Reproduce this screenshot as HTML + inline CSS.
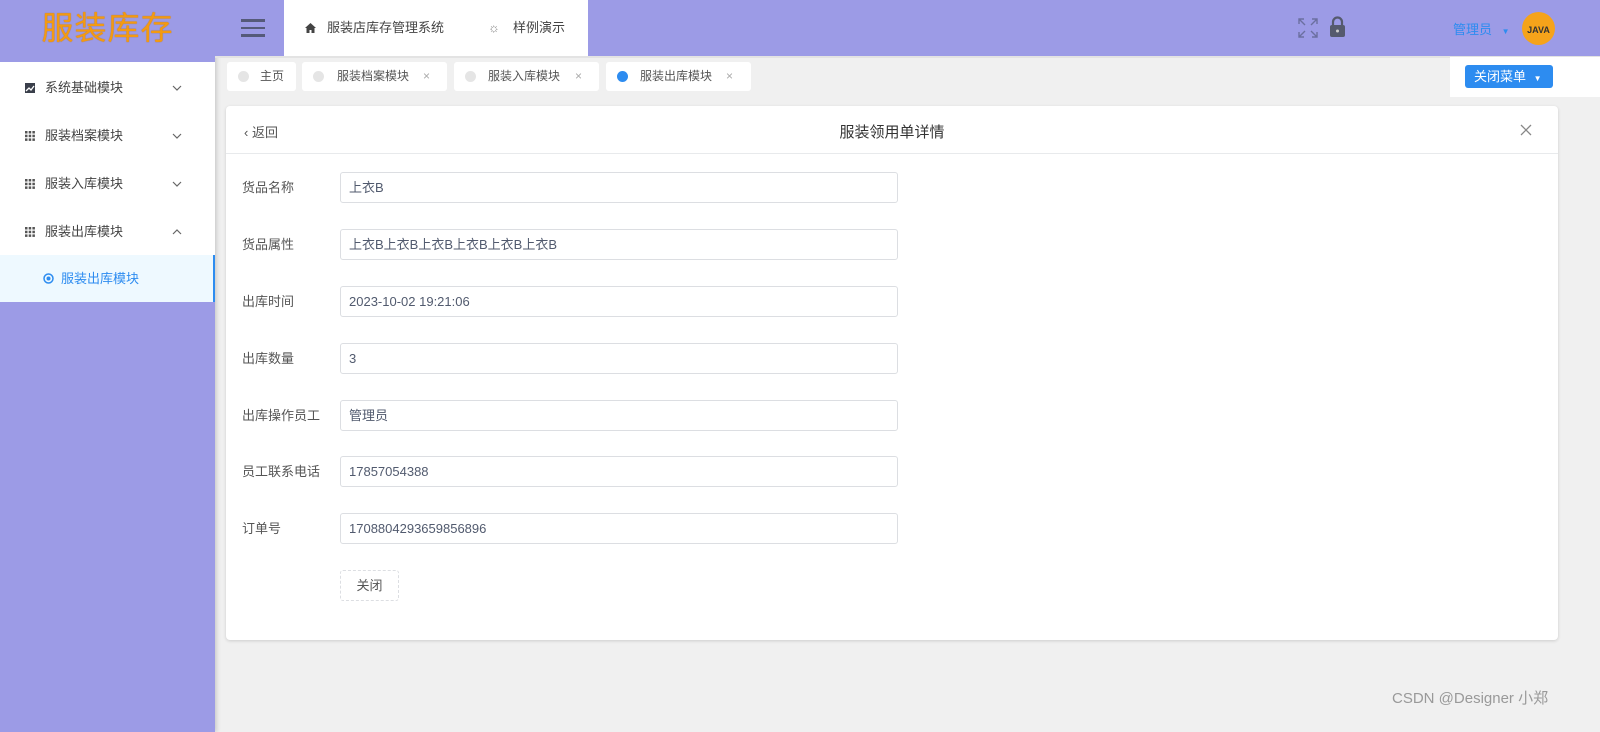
<!DOCTYPE html>
<html><head><meta charset="utf-8"><style>
*{box-sizing:border-box;margin:0;padding:0}
body{width:1600px;height:732px;overflow:hidden;background:#f0f0f0;font-family:"Liberation Sans","Noto Sans CJK SC",sans-serif;font-size:13px;color:#555;position:relative}
.abs{position:absolute}
.side{left:0;top:0;width:215px;height:732px;background:#9c9be6;box-shadow:2px 0 4px rgba(0,0,0,.15)}
.logo{left:0;top:0;width:215px;height:62px;color:#f39a12;font-size:32px;font-weight:normal;text-align:center;line-height:56px;letter-spacing:1px;text-shadow:0 0 1px #b86a00}
.menu{left:0;top:62px;width:215px;height:240px;background:#fff}
.mi{position:absolute;left:0;width:215px;height:48px;line-height:48px;font-size:13px;color:#444}
.mi .ic{position:absolute;left:25px;top:19px;width:10px;height:10px}
.mi .t{position:absolute;left:45px}
.mi .ch{position:absolute;left:172px;top:20px}
.sub{background:#eef9ff;color:#2d8cf0;border-right:2px solid #2d8cf0}
.head{left:215px;top:0;width:1385px;height:56px;background:#9c9be6}
.field{position:absolute;left:242px}
.field .l{position:absolute;left:0;top:0;line-height:31px;width:100px;color:#555}
.field .in{position:absolute;left:98px;top:0;width:558px;height:31px;border:1px solid #dcdee2;border-radius:3px;background:#fff;padding-left:8px;line-height:29px;color:#515a6e}
</style></head><body>
<div class="abs side"></div>
<div class="abs logo">服装库存</div>
<div class="abs menu">
 <div class="mi" style="top:2px"><svg class="ic" viewBox="0 0 10 10"><rect width="10" height="10" fill="#3a3f4b"/><path d="M1 8 L4 5 L6 7 L9 3" stroke="#fff" stroke-width="1.3" fill="none"/></svg><span class="t">系统基础模块</span><svg class="ch" width="10" height="8" viewBox="0 0 10 8"><path d="M1 2l4 4 4-4" stroke="#666" fill="none" stroke-width="1.2"/></svg></div>
 <div class="mi" style="top:50px"><svg class="ic" viewBox="0 0 10 10" fill="#555"><rect x="0" y="0" width="2.5" height="2.5"/><rect x="3.7" y="0" width="2.5" height="2.5"/><rect x="7.4" y="0" width="2.5" height="2.5"/><rect x="0" y="3.7" width="2.5" height="2.5"/><rect x="3.7" y="3.7" width="2.5" height="2.5"/><rect x="7.4" y="3.7" width="2.5" height="2.5"/><rect x="0" y="7.4" width="2.5" height="2.5"/><rect x="3.7" y="7.4" width="2.5" height="2.5"/><rect x="7.4" y="7.4" width="2.5" height="2.5"/></svg><span class="t">服装档案模块</span><svg class="ch" width="10" height="8" viewBox="0 0 10 8"><path d="M1 2l4 4 4-4" stroke="#666" fill="none" stroke-width="1.2"/></svg></div>
 <div class="mi" style="top:98px"><svg class="ic" viewBox="0 0 10 10" fill="#555"><rect x="0" y="0" width="2.5" height="2.5"/><rect x="3.7" y="0" width="2.5" height="2.5"/><rect x="7.4" y="0" width="2.5" height="2.5"/><rect x="0" y="3.7" width="2.5" height="2.5"/><rect x="3.7" y="3.7" width="2.5" height="2.5"/><rect x="7.4" y="3.7" width="2.5" height="2.5"/><rect x="0" y="7.4" width="2.5" height="2.5"/><rect x="3.7" y="7.4" width="2.5" height="2.5"/><rect x="7.4" y="7.4" width="2.5" height="2.5"/></svg><span class="t">服装入库模块</span><svg class="ch" width="10" height="8" viewBox="0 0 10 8"><path d="M1 2l4 4 4-4" stroke="#666" fill="none" stroke-width="1.2"/></svg></div>
 <div class="mi" style="top:146px"><svg class="ic" viewBox="0 0 10 10" fill="#555"><rect x="0" y="0" width="2.5" height="2.5"/><rect x="3.7" y="0" width="2.5" height="2.5"/><rect x="7.4" y="0" width="2.5" height="2.5"/><rect x="0" y="3.7" width="2.5" height="2.5"/><rect x="3.7" y="3.7" width="2.5" height="2.5"/><rect x="7.4" y="3.7" width="2.5" height="2.5"/><rect x="0" y="7.4" width="2.5" height="2.5"/><rect x="3.7" y="7.4" width="2.5" height="2.5"/><rect x="7.4" y="7.4" width="2.5" height="2.5"/></svg><span class="t">服装出库模块</span><svg class="ch" width="10" height="8" viewBox="0 0 10 8"><path d="M1 6l4-4 4 4" stroke="#666" fill="none" stroke-width="1.2"/></svg></div>
 <div class="mi sub" style="top:193px;height:47px;line-height:47px"><svg style="position:absolute;left:43px;top:18px" width="11" height="11" viewBox="0 0 11 11"><circle cx="5.5" cy="5.5" r="4.5" fill="none" stroke="#2d8cf0" stroke-width="1.5"/><circle cx="5.5" cy="5.5" r="2" fill="#2d8cf0"/></svg><span class="t" style="left:61px">服装出库模块</span></div>
</div>
<div class="abs head"></div>
<div class="abs" style="left:241px;top:19px;width:24px;height:18px"><div style="height:2.5px;background:#555a7a;margin-bottom:5px"></div><div style="height:2.5px;background:#555a7a;margin-bottom:5px"></div><div style="height:2.5px;background:#555a7a"></div></div>
<div class="abs" style="left:284px;top:0;width:304px;height:56px;background:#fff;line-height:56px;font-size:13px;color:#444">
 <svg style="position:absolute;left:21px;top:23px" width="11" height="10" viewBox="0 0 11 10"><path d="M5.5 0L0 5h1.5v5h3V7h2v3h3V5H11z" fill="#444"/></svg><span style="position:absolute;left:43px">服装店库存管理系统</span>
 <span style="position:absolute;left:204px;color:#888">☼</span><span style="position:absolute;left:229px">样例演示</span>
</div>
<svg class="abs" style="left:1298px;top:18px" width="20" height="20" viewBox="0 0 20 20" stroke="#6b6fa0" stroke-width="1.4" fill="none"><path d="M1 6V1h5M1 1l6 6M19 6V1h-5M19 1l-6 6M1 14v5h5M1 19l6-6M19 14v5h-5M19 19l-6-6"/></svg>
<svg class="abs" style="left:1329px;top:16px" width="17" height="22" viewBox="0 0 17 22"><path d="M4 9V6a4.5 4.5 0 0 1 9 0v3" stroke="#555a6e" stroke-width="2.2" fill="none"/><rect x="1" y="9" width="15" height="12" rx="2" fill="#555a6e"/><circle cx="8.5" cy="15" r="1.5" fill="#ccc"/></svg>
<div class="abs" style="left:1453px;top:19px;color:#2d8cf0;font-size:13px">管理员 <span style="font-size:8px;margin-left:6px">▼</span></div>
<div class="abs" style="left:1522px;top:12px;width:33px;height:33px;border-radius:50%;background:#f5a31a;color:#333;font-size:9px;font-weight:bold;text-align:center;line-height:36px">JAVA</div>
<div class="abs" style="left:215px;top:56px;width:1385px;height:2px;background:#e3e3e3"></div>
<div class="abs" style="left:227px;top:62px;width:69px;height:29px;background:#fff;border-radius:3px;line-height:29px;font-size:12px;color:#555"><span style="position:absolute;left:11px;top:9px;width:11px;height:11px;border-radius:50%;background:#e5e5e5"></span><span style="position:absolute;left:33px">主页</span></div>
<div class="abs" style="left:302px;top:62px;width:145px;height:29px;background:#fff;border-radius:3px;line-height:29px;font-size:12px;color:#555"><span style="position:absolute;left:11px;top:9px;width:11px;height:11px;border-radius:50%;background:#e5e5e5"></span><span style="position:absolute;left:35px">服装档案模块</span><span style="position:absolute;left:121px;color:#aaa">×</span></div>
<div class="abs" style="left:454px;top:62px;width:145px;height:29px;background:#fff;border-radius:3px;line-height:29px;font-size:12px;color:#555"><span style="position:absolute;left:11px;top:9px;width:11px;height:11px;border-radius:50%;background:#e5e5e5"></span><span style="position:absolute;left:34px">服装入库模块</span><span style="position:absolute;left:121px;color:#aaa">×</span></div>
<div class="abs" style="left:606px;top:62px;width:145px;height:29px;background:#fff;border-radius:3px;line-height:29px;font-size:12px;color:#555"><span style="position:absolute;left:11px;top:9px;width:11px;height:11px;border-radius:50%;background:#2d8cf0"></span><span style="position:absolute;left:34px">服装出库模块</span><span style="position:absolute;left:120px;color:#aaa">×</span></div>
<div class="abs" style="left:1450px;top:57px;width:150px;height:40px;background:#fff"></div>
<div class="abs" style="left:1465px;top:65px;width:88px;height:23px;background:#2d8cf0;border-radius:3px;color:#fff;font-size:13px;line-height:23px;padding-left:9px">关闭菜单 <span style="font-size:8px;margin-left:4px">▼</span></div>
<div class="abs" style="left:226px;top:106px;width:1332px;height:534px;background:#fff;border-radius:4px;box-shadow:0 1px 3px rgba(0,0,0,.15)">
 <div style="position:absolute;left:0;top:0;width:100%;height:48px;border-bottom:1px solid #e8eaec"></div>
 <div style="position:absolute;left:18px;top:16px;font-size:13px;color:#555">‹ 返回</div>
 <div style="position:absolute;left:0;width:100%;top:15px;text-align:center;font-size:15px;color:#333">服装领用单详情</div>
 <svg style="position:absolute;right:26px;top:18px" width="12" height="12" viewBox="0 0 12 12"><path d="M1 1l10 10M11 1L1 11" stroke="#888" stroke-width="1.3"/></svg>
</div>
<div class="field" style="top:172px"><div class="l">货品名称</div><div class="in">上衣B</div></div>
<div class="field" style="top:229px"><div class="l">货品属性</div><div class="in">上衣B上衣B上衣B上衣B上衣B上衣B</div></div>
<div class="field" style="top:286px"><div class="l">出库时间</div><div class="in">2023-10-02 19:21:06</div></div>
<div class="field" style="top:343px"><div class="l">出库数量</div><div class="in">3</div></div>
<div class="field" style="top:400px"><div class="l">出库操作员工</div><div class="in">管理员</div></div>
<div class="field" style="top:456px"><div class="l">员工联系电话</div><div class="in">17857054388</div></div>
<div class="field" style="top:513px"><div class="l">订单号</div><div class="in">1708804293659856896</div></div>
<div class="abs" style="left:340px;top:570px;width:59px;height:31px;border:1px dashed #dcdee2;border-radius:3px;text-align:center;line-height:29px;color:#555">关闭</div>
<div class="abs" style="left:1392px;top:687px;font-size:15px;color:#999">CSDN @Designer 小郑</div>
</body></html>
